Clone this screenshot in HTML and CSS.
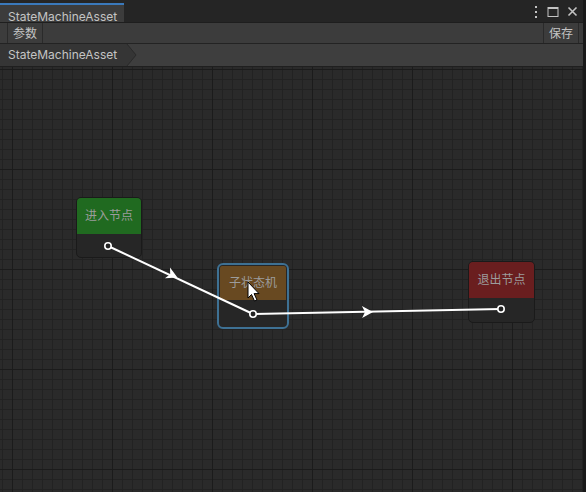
FILE: index.html
```html
<!DOCTYPE html>
<html>
<head>
<meta charset="utf-8">
<link rel="stylesheet" href="styles.css">
</head>
<body>
<div class="window">
  <div class="titlebar">
    <div class="tab">StateMachineAsset</div>
    <div class="title-icons">
      <svg class="ico" width="6" height="14" viewBox="0 0 6 14"><rect x="2" y="1" width="2" height="2" fill="#c4c4c4"/><rect x="2" y="6" width="2" height="2" fill="#c4c4c4"/><rect x="2" y="11" width="2" height="2" fill="#c4c4c4"/></svg>
      <svg class="ico" width="12" height="12" viewBox="0 0 12 12"><rect x="1" y="1.5" width="10" height="9" fill="none" stroke="#c4c4c4" stroke-width="1"/><rect x="1" y="1" width="10" height="2" fill="#c4c4c4"/></svg>
      <svg class="ico" width="11" height="11" viewBox="0 0 11 11"><path d="M1.5 1.5 L9.5 9.5 M9.5 1.5 L1.5 9.5" stroke="#c4c4c4" stroke-width="1.6"/></svg>
    </div>
  </div>
  <div class="toolbar">
    <div class="tbtn">参数</div>
    <div class="spacer"></div>
    <div class="tbtn right">保存</div>
  </div>
  <div class="crumbs">
    <div class="crumb">StateMachineAsset
      <svg class="crumb-arrow" width="11" height="22" viewBox="0 0 11 22"><path d="M0 0 L1 0 L10 11 L1 22 L0 22 Z" fill="#353535"/><path d="M1 0 L10 11 L1 22" fill="none" stroke="#2a2a2a" stroke-width="1"/></svg>
    </div>
  </div>
  <div class="canvas">
    <div class="node entry">
      <div class="node-head">进入节点</div>
      <div class="node-body"></div>
    </div>
    <div class="node sub selected">
      <div class="node-head">子状态机</div>
      <div class="node-body"></div>
    </div>
    <div class="node exit">
      <div class="node-head">退出节点</div>
      <div class="node-body"></div>
    </div>
    <svg class="edges" width="586" height="426" viewBox="0 66 586 426">
      <line x1="108" y1="245" x2="253" y2="313" stroke="#ffffff" stroke-width="2"/>
      <line x1="253" y1="313" x2="501" y2="308" stroke="#ffffff" stroke-width="2"/>
      <g transform="translate(172,274) rotate(25.1)">
        <path d="M6 0 L-5 -6 L-2 0 L-5 6 Z" fill="#ffffff"/>
      </g>
      <g transform="translate(367,311) rotate(-1.15)">
        <path d="M6 0 L-5 -6 L-2 0 L-5 6 Z" fill="#ffffff"/>
      </g>
      <circle cx="108" cy="245" r="3.2" fill="#222" stroke="#ffffff" stroke-width="1.6"/>
      <circle cx="253" cy="313" r="3.2" fill="#222" stroke="#ffffff" stroke-width="1.6"/>
      <circle cx="501" cy="308" r="3.2" fill="#222" stroke="#ffffff" stroke-width="1.6"/>
      <path d="M248 281 L248 297 L251.5 293.5 L254.5 300 L257 299 L254.1 292.6 L259 292.6 Z" fill="#ffffff" stroke="#000000" stroke-width="1"/>
    </svg>
  </div>
</div>
</body>
</html>
```
FILE: styles.css
```css
html, body {
  margin: 0;
  padding: 0;
  background: #282828;
}
.window {
  width: 586px;
  height: 492px;
  display: flex;
  flex-direction: column;
  font-family: Inter, "Noto Sans CJK SC", sans-serif;
  font-size: 12px;
  color: #c4c4c4;
  overflow: hidden;
  box-sizing: border-box;
  border-right: 3px solid #191919;
}
.titlebar {
  height: 22px;
  flex: none;
  display: flex;
  align-items: stretch;
  background: #252525;
  border-bottom: 1px solid #1e1e1e;
}
.tab {
  width: 124px;
  padding: 5px 0 0 8px;
  margin-top: 3px;
  border-top: 2px solid #3a79bb;
  background: #3c3c3c;
  box-sizing: border-box;
  line-height: 14px;
}
.title-icons {
  margin-left: auto;
  display: flex;
  align-items: center;
  gap: 8px;
  padding: 1px 5px 0 0;
}
.ico { display: block; }
.toolbar {
  height: 20px;
  flex: none;
  display: flex;
  align-items: stretch;
  background: #3c3c3c;
  border-bottom: 1px solid #232323;
  padding: 0 4px 0 7px;
}
.tbtn {
  padding: 0 5px;
  line-height: 21px;
  border-left: 1px solid #2a2a2a;
  border-right: 1px solid #2a2a2a;
}
.spacer { flex: 1; }
.crumbs {
  height: 22px;
  flex: none;
  display: flex;
  background: #3e3e3e;
  border-bottom: 1px solid #1f1f1f;
}
.crumb {
  position: relative;
  background: #353535;
  padding: 0 8px 0 8px;
  width: 126px;
  box-sizing: border-box;
  line-height: 22px;
}
.crumb-arrow {
  position: absolute;
  left: 126px;
  top: 0;
}
.canvas {
  position: relative;
  flex: 1;
  background-color: #2a2a2a;
  background-image:
    linear-gradient(to right, #1b1b1b 1px, transparent 1px),
    linear-gradient(to bottom, #1b1b1b 1px, transparent 1px),
    linear-gradient(to right, #222222 1px, transparent 1px),
    linear-gradient(to bottom, #222222 1px, transparent 1px);
  background-size: 100px 100px, 100px 100px, 10px 10px, 10px 10px;
  background-position: 12px 2px, 12px 2px, 2px 2px, 2px 2px;
}
.edges {
  position: absolute;
  left: 0;
  top: 0;
  z-index: 2;
  pointer-events: none;
}
.node {
  position: absolute;
  z-index: 1;
  display: flex;
  flex-direction: column;
  border: 1px solid #1a1a1a;
  border-radius: 5px;
  overflow: hidden;
  background: #262626;
  font-size: 12px;
  color: #9c9c9c;
}
.node-head {
  height: 36px;
  box-sizing: border-box;
  padding-bottom: 3px;
  display: flex;
  align-items: center;
  justify-content: center;
}
.node-body { flex: 1; }
.entry {
  left: 76px;
  top: 130px;
  width: 64px;
  height: 59px;
}
.entry .node-head { background: #206a20; }
.exit {
  left: 468px;
  top: 194px;
  width: 65px;
  height: 60px;
}
.exit .node-head { background: #6a1e1f; }
.sub {
  left: 217px;
  top: 196px;
  width: 66px;
  height: 60px;
  border: 2px solid #3e7194;
  border-radius: 6px;
  padding: 1px;
  background: #262626;
}
.sub .node-head {
  background: #684921;
  height: 34px;
  border-radius: 2px 2px 0 0;
}
```
